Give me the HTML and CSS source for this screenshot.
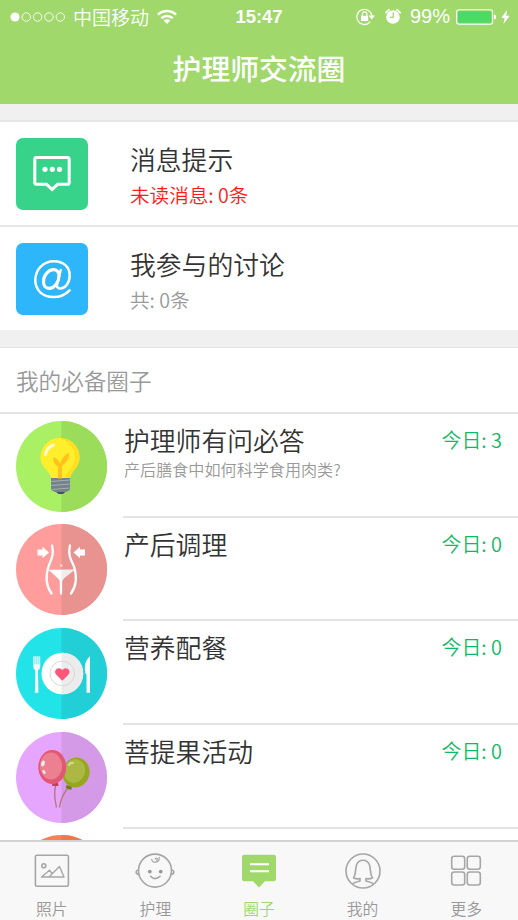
FILE: index.html
```html
<!DOCTYPE html>
<html lang="zh-CN">
<head>
<meta charset="utf-8">
<title>护理师交流圈</title>
<link rel="stylesheet" href="styles.css">
</head>
<body>
<div class="app">
  <header class="header">
    <div class="status">
      <div class="status-left">
        <svg class="signal" width="56" height="12" viewBox="0 0 56 12"><circle cx="5" cy="6" r="4.6" fill="#fff"/><g fill="none" stroke="#fff" stroke-width=".9"><circle cx="16.3" cy="6" r="4.2"/><circle cx="27.6" cy="6" r="4.2"/><circle cx="39" cy="6" r="4.2"/><circle cx="50.3" cy="6" r="4.2"/></g></svg>
        <span class="carrier">中国移动</span>
        <svg width="20" height="16" viewBox="0 0 20 16"><g fill="none" stroke="#fff" stroke-width="2.6"><path d="M1 5.600a13 13 0 0 1 18 0"/><path d="M4.300 9.300a8.200 8.200 0 0 1 11.400 0"/></g><path d="M6.600 11.600a4.800 4.800 0 0 1 6.800 0L10 15z" fill="#fff"/></svg>
      </div>
      <span class="clock">15:47</span>
      <div class="status-right">
        <svg width="19" height="18" viewBox="0 0 19 18"><path d="M14.4 13.7A7.6 7.6 0 1 1 16 8" fill="none" stroke="#fff" stroke-width="1.2"/><path d="M12.6 7.6H19l-3.2 4z" fill="#fff"/><rect x="5" y="7.8" width="7.2" height="5.2" rx=".6" fill="#fff"/><path d="M6.3 8V6.2a2.3 2.3 0 0 1 4.6 0V8" fill="none" stroke="#fff" stroke-width="1.2"/></svg>
        <svg class="alarm" width="16" height="17" viewBox="0 0 16 17"><circle cx="8" cy="9" r="6.8" fill="#fff"/><path d="M.8 4.6 4 1.6M15.2 4.6 12 1.6" stroke="#fff" stroke-width="1.8" stroke-linecap="round"/><path d="M8.2 4.6V9.4H5" fill="none" stroke="#a0d86c" stroke-width="1.2"/></svg>
        <span class="percent">99%</span>
        <svg class="battery" width="41" height="16" viewBox="0 0 41 16"><rect x=".6" y=".8" width="36" height="14.4" rx="2.4" fill="none" stroke="#fff" stroke-width="1.1"/><rect x="2" y="2.2" width="33.2" height="11.6" rx="1" fill="#4cd964"/><path d="M38 5.3q2.2.5 2.2 2.7T38 10.7z" fill="#fff"/></svg>
        <svg width="9" height="16" viewBox="0 0 9 16"><path d="M6.2.8.3 9h3.4L2.4 15 8.8 6.7H5.2z" fill="#fff"/></svg>
      </div>
    </div>
    <h1 class="title">护理师交流圈</h1>
  </header>

  <main class="content">
    <section class="notices">
      <a class="notice">
        <svg class="tile" viewBox="0 0 72 72"><rect width="72" height="72" rx="7" fill="#38d38b"/><path d="M20.300 19.600h31.400a1.500 1.500 0 0 1 1.500 1.500v23.700a1.500 1.500 0 0 1-1.500 1.500H41.600L36.200 51.400l-5.700-5.100H20.300a1.500 1.500 0 0 1-1.500-1.500V21.100a1.500 1.500 0 0 1 1.500-1.500z" fill="none" stroke="#fff" stroke-width="3"/><g fill="#fff"><circle cx="29" cy="31.300" r="2.600"/><circle cx="36.300" cy="31.300" r="2.600"/><circle cx="43.500" cy="31.300" r="2.600"/></g></svg>
        <div class="notice-text"><span class="name">消息提示</span><span class="info unread">未读消息: 0条</span></div>
      </a>
      <a class="notice">
        <svg class="tile" viewBox="0 0 72 72"><rect width="72" height="72" rx="7" fill="#2db6fa"/><g fill="none" stroke="#fff" stroke-linecap="round"><path d="M53.500 47.300C49 52.300 43.500 54 37.300 54 26.500 54 19.300 47 19.300 37.300 19.300 26 27.500 18.200 38 18.200c9.500 0 15.700 5.800 15.700 14 0 7.500-4.500 13.300-9.500 13.300-3 0-3.700-2-3-5L44.700 27" stroke-width="2.500"/><path d="M43 33c0-3.800-2-6.300-5.300-6.300-5.700 0-10.200 6-10.200 11.800 0 4.200 2.200 6.900 5.700 6.900 5 0 9.800-6.400 9.800-12.400z" stroke-width="3.200"/></g></svg>
        <div class="notice-text"><span class="name">我参与的讨论</span><span class="info">共: 0条</span></div>
      </a>
    </section>

    <section class="circles">
      <h2 class="section-title">我的必备圈子</h2>
      <article class="circle">
        <svg class="avatar" viewBox="0 0 91 91"><circle cx="45.5" cy="45.5" r="45.5" fill="#a9f064"/><path d="M45.5 0a45.5 45.5 0 0 1 0 91z" fill="#9cdc5b"/>
          <path d="M35 56h19v11.5q0 2-2 2.5l-3.500 1.500q-4 2.500-8 0l-3.500-1.500q-2-.5-2-2.500z" fill="#74838b"/><path d="M35 60.500 54 59M35 64.500l19-1.500M35.500 68.500l18-1.500" stroke="#a4afb4" stroke-width="1"/><path d="M40.500 71h8.500l-2 2h-4.500z" fill="#46505a"/>
          <path d="M24.500 37C24.500 25.500 33 17 44 17s19.500 8.500 19.500 19.500c0 10-8 13-9.500 20.500H35C33.500 49 24.500 46.500 24.500 37z" fill="#ffee2b"/><path d="M44 17c11 0 19.500 8.500 19.500 19.500 0 10-8 13-9.500 20.500h-5c3-9 10-11 10-21 0-9-7-16-15-19z" fill="#ffdf20"/>
          <path d="M42 57.500V45.500q-4.500-1.500-5-9.500 5.500 1.500 7 7 2-7.500 9-11.500.5 9-7 13v13z" fill="#ffc21b"/><path d="M29.500 33.500q1-7 8-9.500" fill="none" stroke="#fffad0" stroke-width="3" stroke-linecap="round"/></svg>
        <div class="circle-body"><div class="circle-text"><h3 class="name">护理师有问必答</h3><p class="summary">产后膳食中如何科学食用肉类?</p></div><span class="today">今日: 3</span></div>
      </article>
      <article class="circle">
        <svg class="avatar" viewBox="0 0 91 91"><circle cx="45.5" cy="45.5" r="45.5" fill="#ff9d9c"/><path d="M45.5 0a45.5 45.5 0 0 1 0 91z" fill="#e99391"/>
          <path d="M21.500 25.500h5v-2.800l6.500 5.800-6.500 5.800v-2.800h-5zM69 25.500h-5v-2.800l-6.500 5.800 6.500 5.800v-2.800h5z" fill="#fff"/>
          <g fill="none" stroke="#fff" stroke-width="2.300" stroke-linecap="round"><path d="M36 21.500c2.500 10-1.500 15-3.500 21-3.500 11-2 20 3 27M54 21.500c-2.500 10 1.500 15 4 21 3.500 11 2 20-3 27"/><path d="M45 52v17.500"/></g>
          <path d="M32.500 45.700h26L48 54q-1.500 2-3 5-1.500-3-3.500-5z" fill="#fff"/><path d="M45.500 45.700h13L48 54q-1.500 2-2.500 4z" fill="#eee"/><circle cx="45.300" cy="41.500" r="1.200" fill="#ffd6d5"/></svg>
        <div class="circle-body"><div class="circle-text"><h3 class="name">产后调理</h3></div><span class="today">今日: 0</span></div>
      </article>
      <article class="circle">
        <svg class="avatar" viewBox="0 0 91 91"><circle cx="45.5" cy="45.5" r="45.5" fill="#22e3e8"/><path d="M45.5 0a45.5 45.5 0 0 1 0 91z" fill="#22cfd7"/>
          <circle cx="46.300" cy="45.500" r="20.800" fill="#fff"/><path d="M45.500 24.700h1a20.800 20.800 0 0 1 0 41.600h-1z" fill="#ececec"/><circle cx="46.300" cy="45.500" r="12.300" fill="none" stroke="#d4d4d4" stroke-width=".9"/>
          <path d="M46.300 52.800l-6-6c-3.700-4.300 2.300-9.300 6-4.600 3.700-4.700 9.700.3 6 4.600z" fill="#fc577b"/>
          <path d="M17.300 28.300h1.300v8h.7v-8h1.300v8h.7v-8h1.300v8h.7v-8h.9v10.500q0 3-2.200 3.500l.4 22.500h-3.500l.4-22.500q-2-.5-2-3.500zM74 28.300v36.500h-3.500V46.500q-1.800-1-1.700-6.500.2-8 5.200-11.700z" fill="#f5fbfb"/></svg>
        <div class="circle-body"><div class="circle-text"><h3 class="name">营养配餐</h3></div><span class="today">今日: 0</span></div>
      </article>
      <article class="circle">
        <svg class="avatar" viewBox="0 0 91 91"><circle cx="45.5" cy="45.5" r="45.5" fill="#e6a5ff"/><path d="M45.5 0a45.5 45.5 0 0 1 0 91z" fill="#d49ae8"/>
          <path d="M39.500 54c-2 8-.5 14 1 21.500M52 56c-5 6-7.500 11-8.500 19.500" fill="none" stroke="#b5776e" stroke-width="1.300"/>
          <path d="M50.500 53l5.500 1.500-.8 3.500-5.500-2z" fill="#6b8017"/><path d="M36.500 50.500h5.500l.5 3.500h-6.500z" fill="#bd4158"/>
          <ellipse cx="60" cy="40.500" rx="13.500" ry="15" transform="rotate(15 60 40.500)" fill="#95a71c"/><ellipse cx="58.500" cy="39" rx="10.500" ry="12" transform="rotate(15 58.500 39)" fill="#abb944"/><path d="M53 33q1.500-3 4-2" stroke="#d2dc93" stroke-width="2" fill="none" stroke-linecap="round"/>
          <ellipse cx="36.300" cy="35" rx="14" ry="17" fill="#e25874"/><ellipse cx="35" cy="34" rx="11" ry="13.500" fill="#eb8090"/><ellipse cx="27" cy="31.500" rx="1.800" ry="3" transform="rotate(15 27 31.500)" fill="#ffe7ec"/><ellipse cx="28" cy="40" rx="1.300" ry="2.200" transform="rotate(-30 28 40)" fill="#ffe7ec"/></svg>
        <div class="circle-body"><div class="circle-text"><h3 class="name">菩提果活动</h3></div><span class="today">今日: 0</span></div>
      </article>
      <article class="circle">
        <svg class="avatar" viewBox="0 0 91 91"><circle cx="45.5" cy="45.5" r="45.5" fill="#fd7f53"/><path d="M45.5 0a45.5 45.5 0 0 1 0 91z" fill="#ec7850"/></svg>
        <div class="circle-body"></div>
      </article>
    </section>
  </main>

  <nav class="tabs">
    <a class="tab"><svg viewBox="0 0 40 38"><g fill="none" stroke="#a6a6a6" stroke-width="1.600"><rect x="3.400" y="3.200" width="33" height="31" rx="1.500"/><circle cx="11.800" cy="13.800" r="2"/><path d="M9.500 25l8-6.800 2.700 3.500 7.300-7.200 4.500 10.500zM17 25l4.500-4.500" stroke-linejoin="round" stroke-width="1.400"/></g></svg><span>照片</span></a>
    <a class="tab"><svg viewBox="0 0 40 38"><g fill="none" stroke="#a6a6a6" stroke-width="1.600" stroke-linecap="round"><circle cx="20" cy="18.600" r="16.500"/><path d="M3.400 18.300c-3-.5-3.300 4 .8 4.200M36.600 18.300c3-.5 3.300 4-.8 4.200M15.500 24.300q4.500 4.500 9.500 0"/><path d="M16.700 7.300c.5 4.500 8.300 3.500 7.500-2M20.200 7c1-2.200 3.200 0 1.500 1.300" stroke-width="1.200"/></g><g fill="#999"><circle cx="14.800" cy="19.600" r="1.900"/><circle cx="25.700" cy="19.600" r="1.900"/></g></svg><span>护理</span></a>
    <a class="tab active"><svg viewBox="0 0 40 38"><path d="M5 2.700h30q2 0 2 2v22.500q0 2-2 2h-9L20 35.500l-6-6.300H5q-2 0-2-2V4.700q0-2 2-2z" fill="#a0d86c"/><path d="M11 12.300h19M11 19.300h19" stroke="#fff" stroke-width="2"/></svg><span>圈子</span></a>
    <a class="tab"><svg viewBox="0 0 40 38"><g fill="none" stroke="#a6a6a6" stroke-width="1.600" stroke-linejoin="round"><circle cx="20" cy="19" r="17"/><path d="M9 32.300q1.500-1.600 8-3.300v-2.500q-3.500 1-6.500-.8c3-3.700 1.300-8.200 3.100-13 2.400-6 10.400-6 12.800 0 1.800 4.800.1 9.300 3.100 13q-3 1.800-6.500.8V29q6.500 1.700 8 3.300"/></g></svg><span>我的</span></a>
    <a class="tab"><svg viewBox="0 0 40 38"><g fill="none" stroke="#a6a6a6" stroke-width="1.600"><rect x="5.700" y="4.300" width="13" height="13" rx="2.500"/><rect x="21.300" y="4.300" width="13" height="13" rx="2.500"/><rect x="5.700" y="20" width="13" height="13" rx="2.500"/><rect x="21.300" y="20" width="13" height="13" rx="2.500"/></g></svg><span>更多</span></a>
  </nav>
</div>
</body>
</html>
```
FILE: styles.css
```css
* { box-sizing: border-box; margin: 0; padding: 0; }

body {
  font-family: "Noto Sans CJK SC", sans-serif;
  font-weight: 350;
  background: #fff;
}

svg { display: block; flex: none; }

.app {
  width: 518px;
  height: 920px;
  display: flex;
  flex-direction: column;
  overflow: hidden;
}

.header {
  flex: none;
  height: 103.5px;
  background: #a0d86c;
  color: #fff;
}

.status {
  height: 33px;
  padding: 0 8px 0 10px;
  display: grid;
  grid-template-columns: 1fr auto 1fr;
  align-items: center;
}

.status-left, .status-right { display: flex; align-items: center; }
.status-right { justify-content: flex-end; }
.carrier { font-size: 19px; line-height: 30px; margin: 0 8px 0 7px; }
.clock { font: bold 18.4px/33px "Liberation Sans", sans-serif; margin-right: 2px; }
.alarm { margin-left: 10px; }
.percent { font: 20px/33px "Liberation Sans", sans-serif; margin: 0 6px 0 9px; }
.battery { margin-right: 4px; }

.title {
  font-size: 28.8px;
  font-weight: 500;
  line-height: 70px;
  text-align: center;
}

.content {
  flex: 1;
  min-height: 0;
  overflow: hidden;
  background: #f0f0f0;
}

.notices { margin: 16.5px 0 17px; background: #fff; }

.notice {
  display: flex;
  align-items: center;
  height: 105px;
  padding-left: 16px;
  border-top: 2px solid #e6e6e6;
}

.tile { width: 72px; height: 72px; margin-right: 42px; }
.notice-text { display: flex; flex-direction: column; padding-top: 6px; }
.name { font-size: 25.8px; font-weight: 350; line-height: 36px; color: #333; }
.info { font-size: 19.6px; line-height: 36px; color: #999; }
.info.unread { color: #ff1a1a; }

.circles { background: #fff; border-top: 1.5px solid #e2e2e2; }

.section-title {
  height: 66px;
  padding-left: 16px;
  border-bottom: 2px solid #e4e4e4;
  font-size: 22.6px;
  font-weight: 350;
  line-height: 65px;
  color: #999;
}

.circle { display: flex; height: 103.7px; padding-left: 16px; }
.avatar { width: 91px; height: 91px; margin: 6.5px 16px 0 0; }

.circle-body {
  flex: 1;
  display: flex;
  justify-content: space-between;
  padding: 8px 16px 0 1px;
  border-bottom: 2px solid #e4e4e4;
}

.summary { font-size: 16.1px; line-height: 22px; color: #999; }
.today { font-size: 19.9px; line-height: 36px; color: #12b865; }

.tabs {
  flex: none;
  display: grid;
  grid-template-columns: repeat(5, 1fr);
  height: 80px;
  border-top: 2px solid #d2d2d2;
  background: #f8f8f8;
}

.tab {
  display: flex;
  flex-direction: column;
  align-items: center;
  padding-top: 10px;
  font-size: 15.8px;
  line-height: 24px;
  color: #999;
}

.tab svg { width: 40px; height: 38px; margin-bottom: 7px; }
.tab.active { color: #a0d86c; }
```
